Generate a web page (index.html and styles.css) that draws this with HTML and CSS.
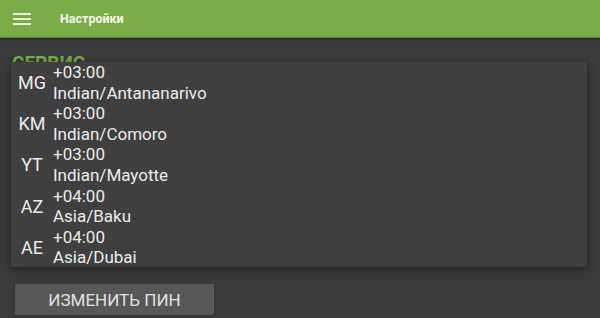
FILE: index.html
```html
<!DOCTYPE html>
<html lang="ru">
<head>
<meta charset="utf-8">
<link rel="stylesheet" href="styles.css">
</head>
<body>
<header class="appbar">
  <svg class="menu" width="18" height="14" viewBox="0 0 18 14"><rect x="0" y="1" width="18" height="2" fill="#e8f0dc"/><rect x="0" y="6" width="18" height="2" fill="#e8f0dc"/><rect x="0" y="11" width="18" height="2" fill="#e8f0dc"/></svg>
  <span class="title">Настройки</span>
</header>
<main class="content">
  <h2 class="section">СЕРВИС</h2>
  <div class="popup">
    <div class="row"><span class="code">MG</span><div class="info"><div>+03:00</div><div>Indian/Antananarivo</div></div></div>
    <div class="row"><span class="code">KM</span><div class="info"><div>+03:00</div><div>Indian/Comoro</div></div></div>
    <div class="row"><span class="code">YT</span><div class="info"><div>+03:00</div><div>Indian/Mayotte</div></div></div>
    <div class="row"><span class="code">AZ</span><div class="info"><div>+04:00</div><div>Asia/Baku</div></div></div>
    <div class="row"><span class="code">AE</span><div class="info"><div>+04:00</div><div>Asia/Dubai</div></div></div>
  </div>
  <button class="btn">ИЗМЕНИТЬ ПИН</button>
</main>
</body>
</html>
```
FILE: styles.css
```css
html, body {
  margin: 0;
  padding: 0;
  background: #3a3a3a;
  font-family: Roboto, "Noto Sans", sans-serif;
  overflow: hidden;
}
.appbar {
  height: 37px;
  background: #7cab48;
  border-bottom: 1px solid #5b8533;
  display: flex;
  align-items: center;
  padding-left: 13px;
  box-shadow: 0 1px 3px rgba(0,0,0,0.3);
}
.menu {
  display: block;
}
.title {
  margin-left: 29px;
  color: #f4f8ee;
  font-size: 12.5px;
  font-weight: 700;
}
.content {
  position: relative;
  padding: 0 11px;
}
.section {
  margin: 0;
  padding-top: 14px;
  padding-left: 1px;
  color: #7cab48;
  font-size: 19px;
  font-weight: 700;
  line-height: 22px;
  height: 10px;
}
.popup {
  position: relative;
  height: 205px;
  width: 576px;
  background: #3f3f3f;
  overflow: hidden;
  box-shadow: 0 2px 8px rgba(0,0,0,0.45);
  border-radius: 2px;
}
.row {
  display: flex;
  align-items: center;
  height: 41.2px;
  color: #ececec;
}
.code {
  width: 42px;
  text-align: center;
  font-size: 18px;
}
.info {
  font-size: 17px;
  line-height: 20.6px;
}
.btn {
  margin: 17px 0 0 4px;
  width: 199px;
  height: 31px;
  background: #575757;
  color: #e2e2e2;
  border: none;
  border-radius: 2px;
  font-family: Roboto, "Noto Sans", sans-serif;
  font-size: 17px;
  padding: 0;
  box-shadow: 0 1px 2px rgba(0,0,0,0.3);
}
```
